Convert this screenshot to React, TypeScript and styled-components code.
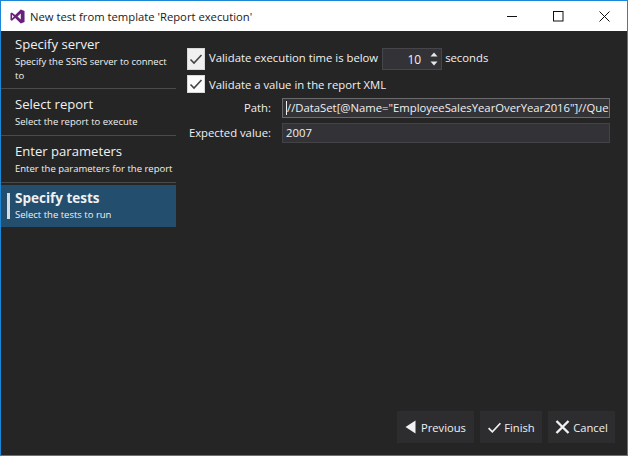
import React from 'react'
import styled, { createGlobalStyle } from 'styled-components'

const GlobalStyle = createGlobalStyle`
  html, body {
    margin: 0;
    padding: 0;
    background: #252526;
  }
`

const Window = styled.div`
  box-sizing: border-box;
  width: 628px;
  height: 456px;
  border: 1px solid #1b87d6;
  display: flex;
  flex-direction: column;
  font-family: "Open Sans", "Noto Sans", sans-serif;
  color: #f1f1f1;
  overflow: hidden;
`

const TitleBar = styled.div`
  height: 30px;
  flex: none;
  background: #fff;
  display: flex;
  align-items: center;
  padding-left: 9px;
  color: #1a1a1a;
  font-size: 11.25px;
`

const TitleText = styled.span`
  margin-left: 5px;
  flex: 1;
`

const WindowButton = styled.div`
  width: 46px;
  height: 30px;
  display: flex;
  align-items: center;
  justify-content: center;
`

const Body = styled.div`
  flex: 1;
  display: flex;
  background: #252526;
  min-height: 0;
`

const Sidebar = styled.div`
  width: 175px;
  flex: none;
`

const Step = styled.div<{ $active?: boolean; $height: number; $top: number }>`
  position: relative;
  box-sizing: border-box;
  padding: ${p => p.$top}px 0 0 14px;
  height: ${p => p.$height}px;
  background: ${p => (p.$active ? '#234e6e' : 'transparent')};
  margin-top: ${p => (p.$active ? '2px' : '0')};
  border-bottom: ${p => (p.$active ? 'none' : '1px solid #4a4a4b')};
`

const Marker = styled.div`
  position: absolute;
  left: 6px;
  top: 8px;
  width: 3px;
  height: 26px;
  background: #d6dde2;
`

const StepTitle = styled.div<{ $active?: boolean }>`
  font-size: ${p => (p.$active ? '13.5px' : '13.1px')};
  line-height: 18px;
  font-weight: ${p => (p.$active ? 700 : 400)};
  color: #f1f1f1;
`

const StepHint = styled.div<{ $active?: boolean }>`
  font-size: 9.5px;
  line-height: 14px;
  margin-top: ${p => (p.$active ? '1px' : '2px')};
  color: #f1f1f1;
`

const Main = styled.div`
  flex: 1;
  display: flex;
  flex-direction: column;
  padding: 17px 12px 12px 11px;
  min-width: 0;
`

const CheckRow = styled.div<{ $height: number }>`
  display: flex;
  align-items: center;
  height: ${p => p.$height}px;
  font-size: 11.3px;
  margin-bottom: 5px;
`

const CheckLabel = styled.span<{ $lift: number }>`
  padding-bottom: ${p => p.$lift}px;
`

const Box = styled.div<{ $height: number; $tint: string }>`
  box-sizing: border-box;
  width: 18px;
  height: ${p => p.$height}px;
  border: 1px solid #d8d8d8;
  background: ${p => p.$tint};
  display: flex;
  align-items: center;
  justify-content: center;
  margin-right: 4px;
  flex: none;
`

const Spinner = styled.div`
  box-sizing: border-box;
  width: 60px;
  height: 22px;
  margin: 0 3px 0 4px;
  background: #333337;
  border: 1px solid #46464a;
  display: flex;
  align-items: center;
  justify-content: flex-end;
  font-size: 12px;
  padding-right: 3px;
  gap: 9px;
`

const SpinArrows = styled.div`
  display: flex;
  flex-direction: column;
  gap: 4px;
`

const FieldRow = styled.div`
  display: flex;
  align-items: center;
  height: 20px;
  margin-bottom: 5px;
  font-size: 11.3px;
`

const FieldLabel = styled.div`
  width: 84px;
  text-align: right;
  flex: none;
  margin-right: 11px;
  padding-bottom: 2px;
`

const Input = styled.div<{ $focused?: boolean }>`
  box-sizing: border-box;
  width: 328px;
  height: 20px;
  background: #333337;
  border: 1px solid ${p => (p.$focused ? '#6a6a6d' : '#434346')};
  font-size: 11.3px;
  line-height: 18px;
  padding: 0 1px 0 3px;
  white-space: nowrap;
  overflow: hidden;
`

const Caret = styled.span`
  display: inline-block;
  width: 1px;
  height: 14px;
  background: #f1f1f1;
  vertical-align: -3px;
`

const Footer = styled.div`
  margin-top: auto;
  display: flex;
  justify-content: flex-end;
  gap: 6px;
`

const Button = styled.div<{ $width: number; $gap: number }>`
  width: ${p => p.$width}px;
  height: 32px;
  background: #2d2d30;
  display: flex;
  align-items: center;
  justify-content: center;
  gap: ${p => p.$gap}px;
  font-size: 11.2px;
`

function Check({ size, color }: { size: number; color: string }) {
  return (
    <svg width={size} height={size} viewBox="0 0 14 14">
      <path d="M1.5 7.5 L5 11 L12.5 3" fill="none" stroke={color} strokeWidth="1.6" />
    </svg>
  )
}

function App() {
  return (
    <Window>
      <GlobalStyle />
      <TitleBar>
        <svg width="15" height="15" viewBox="0 0 16 16">
          <path d="M11.5 0.5 L15.5 2.2 V13.8 L11.5 15.5 L5.5 9.7 L2 12.4 L0.5 11.6 V4.4 L2 3.6 L5.5 6.3 Z M11.5 4.7 L8 8 L11.5 11.3 Z M2.2 6 V10 L4.2 8 Z" fill="#68217a" fillRule="evenodd" />
        </svg>
        <TitleText>New test from template 'Report execution'</TitleText>
        <WindowButton>
          <svg width="11" height="11" viewBox="0 0 11 11">
            <path d="M0 5.5 H10" stroke="#111" strokeWidth="1" />
          </svg>
        </WindowButton>
        <WindowButton>
          <svg width="11" height="11" viewBox="0 0 11 11">
            <rect x="0.5" y="0.5" width="9.5" height="9.5" fill="none" stroke="#111" />
          </svg>
        </WindowButton>
        <WindowButton>
          <svg width="11" height="11" viewBox="0 0 11 11">
            <path d="M0.5 0.5 L10.5 10.5 M10.5 0.5 L0.5 10.5" stroke="#111" strokeWidth="1" />
          </svg>
        </WindowButton>
      </TitleBar>
      <Body>
        <Sidebar>
          <Step $height={58} $top={4}>
            <StepTitle>Specify server</StepTitle>
            <StepHint>Specify the SSRS server to connect to</StepHint>
          </Step>
          <Step $height={47} $top={6}>
            <StepTitle>Select report</StepTitle>
            <StepHint>Select the report to execute</StepHint>
          </Step>
          <Step $height={47} $top={6}>
            <StepTitle>Enter parameters</StepTitle>
            <StepHint>Enter the parameters for the report</StepHint>
          </Step>
          <Step $active $height={42} $top={4}>
            <Marker />
            <StepTitle $active>Specify tests</StepTitle>
            <StepHint $active>Select the tests to run</StepHint>
          </Step>
        </Sidebar>
        <Main>
          <CheckRow $height={22}>
            <Box $height={22} $tint="#f0f0f0">
              <Check size={14} color="#444" />
            </Box>
            <CheckLabel $lift={4}>Validate execution time is below</CheckLabel>
            <Spinner>
              10
              <SpinArrows>
                <svg width="8" height="5" viewBox="0 0 8 5"><path d="M0.5 4.5 L4 0.5 L7.5 4.5 Z" fill="#e8e8e8" /></svg>
                <svg width="8" height="5" viewBox="0 0 8 5"><path d="M0.5 0.5 L4 4.5 L7.5 0.5 Z" fill="#e8e8e8" /></svg>
              </SpinArrows>
            </Spinner>
            <CheckLabel $lift={4}>seconds</CheckLabel>
          </CheckRow>
          <CheckRow $height={18}>
            <Box $height={18} $tint="#fbfbfb">
              <Check size={14} color="#444" />
            </Box>
            <CheckLabel $lift={0}>Validate a value in the report XML</CheckLabel>
          </CheckRow>
          <FieldRow>
            <FieldLabel>Path:</FieldLabel>
            <Input $focused><Caret />//DataSet[@Name="EmployeeSalesYearOverYear2016"]//Que</Input>
          </FieldRow>
          <FieldRow>
            <FieldLabel>Expected value:</FieldLabel>
            <Input>2007</Input>
          </FieldRow>
          <Footer>
            <Button $width={77} $gap={5}>
              <svg width="11" height="14" viewBox="0 0 11 14"><path d="M10.5 0.5 V13.5 L0.5 7 Z" fill="#f1f1f1" /></svg>
              Previous
            </Button>
            <Button $width={62} $gap={2}>
              <Check size={15} color="#f1f1f1" />
              Finish
            </Button>
            <Button $width={67} $gap={3}>
              <svg width="15" height="14" viewBox="0 0 15 14"><path d="M1.5 1 L13.5 13 M13.5 1 L1.5 13" stroke="#f1f1f1" strokeWidth="2.4" /></svg>
              Cancel
            </Button>
          </Footer>
        </Main>
      </Body>
    </Window>
  )
}

export default App
